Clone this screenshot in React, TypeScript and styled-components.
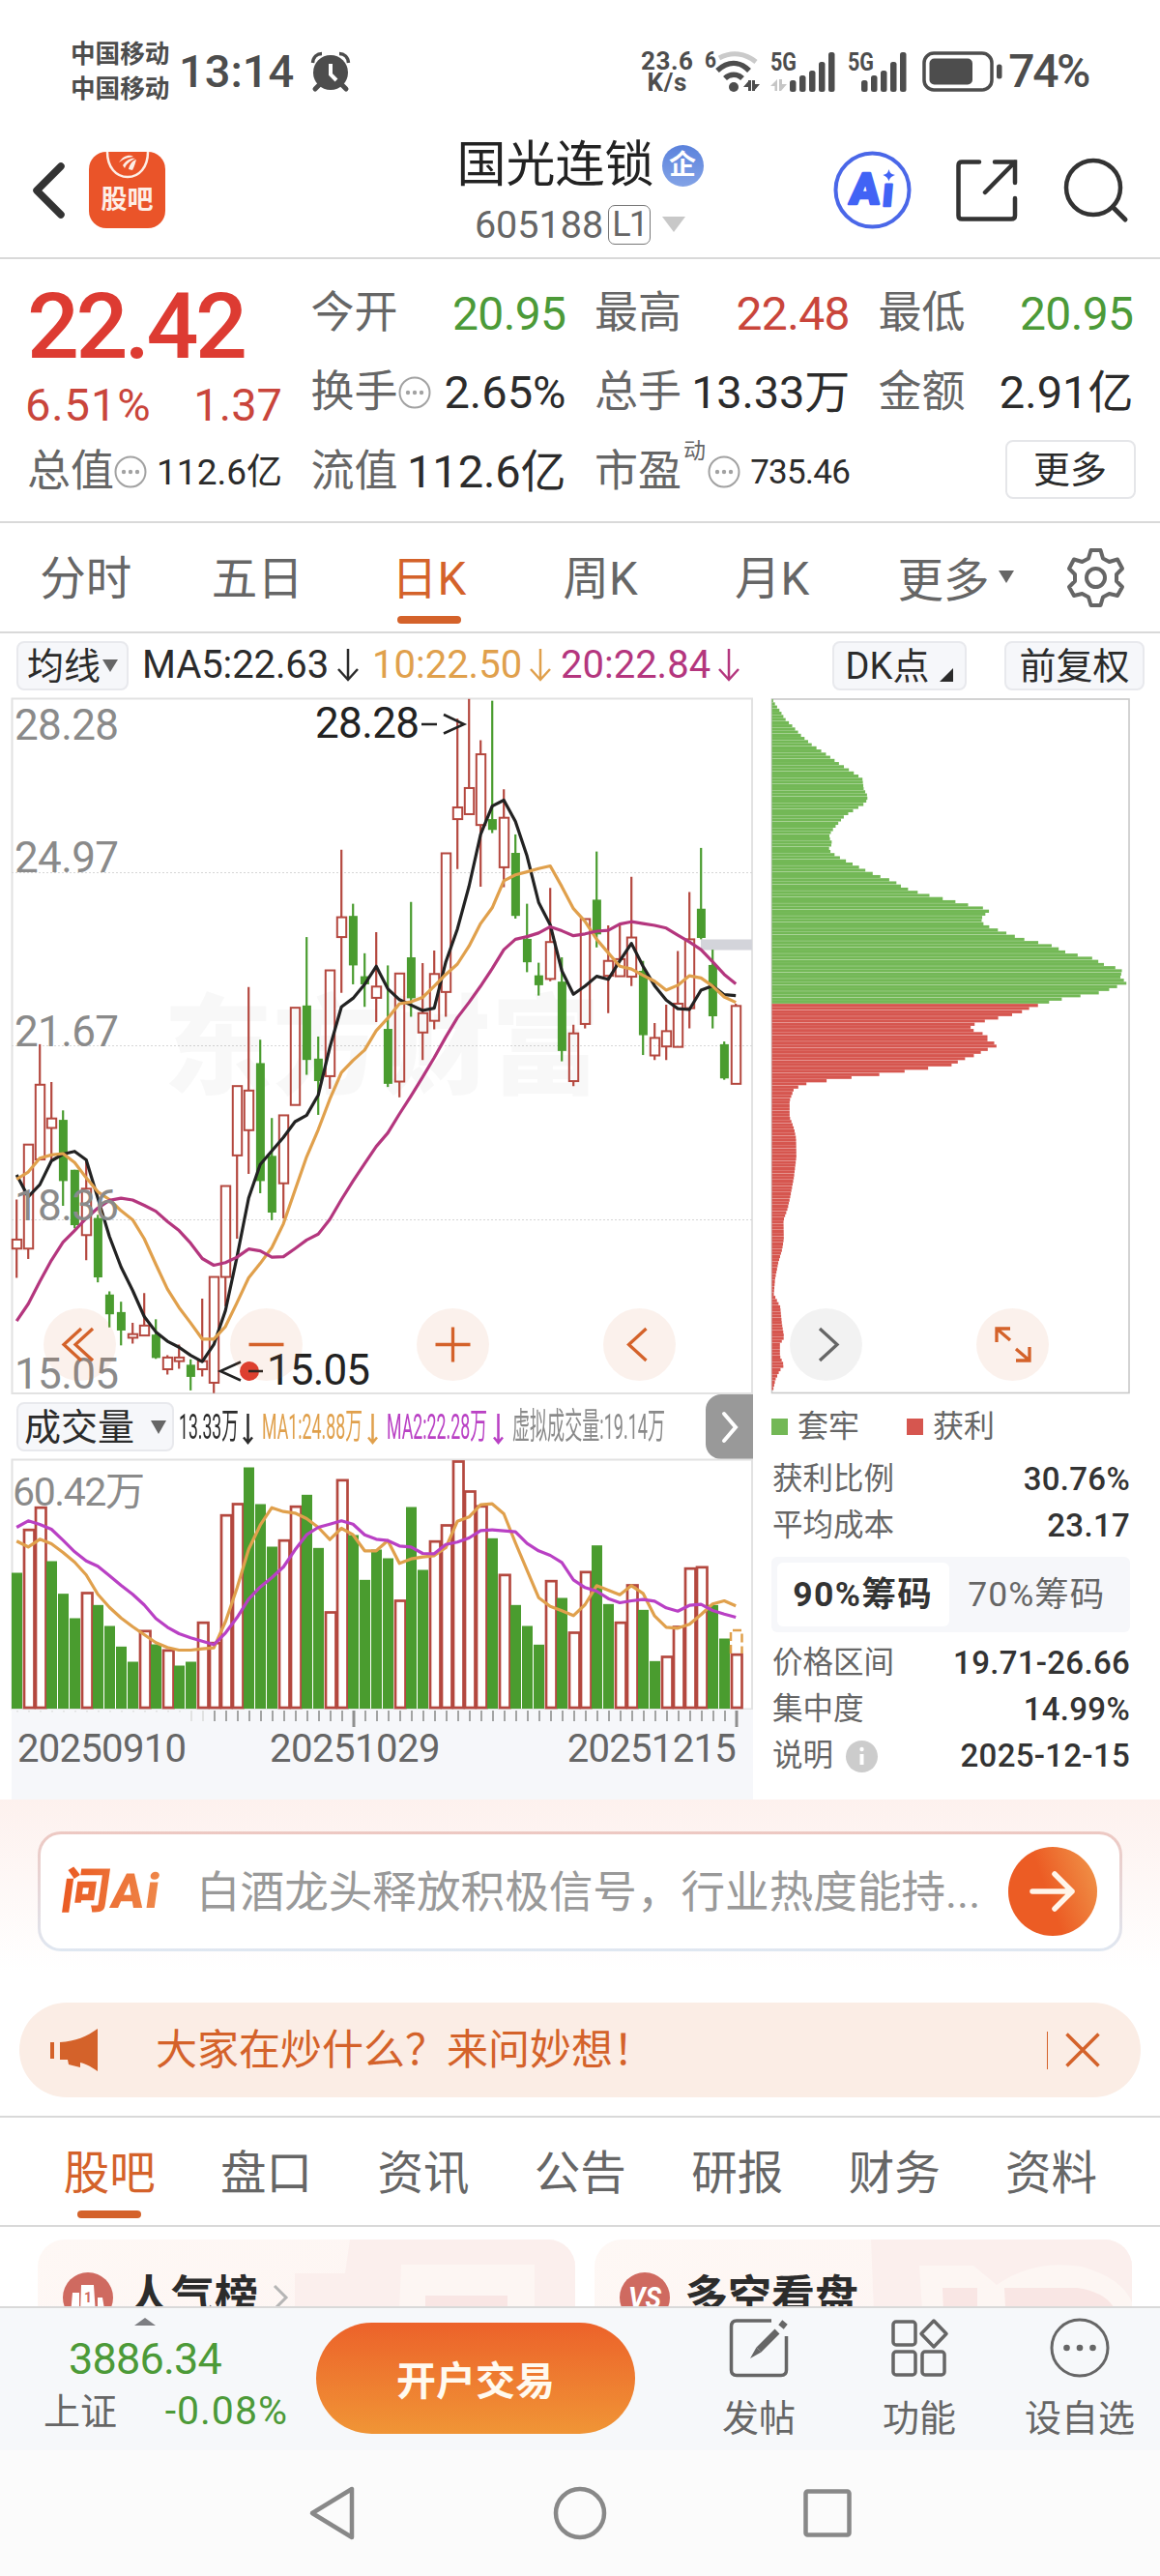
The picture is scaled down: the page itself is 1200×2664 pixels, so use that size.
import React from 'react';
import styled, { createGlobalStyle, css } from 'styled-components';

const COLORS = {
  red: '#c9453b',
  deepRed: '#dd3b32',
  green: '#4c9a38',
  orange: '#d4622a',
  ink: '#2b2b2b',
  grey: '#666',
  light: '#8a8a8a',
  line: '#d9d9d9',
  chip: '#f6f7fa',
  ma5: '#222',
  ma10: '#e0a04c',
  ma20: '#b4367e',
  vol2: '#b940c4',
};

const GlobalStyle = createGlobalStyle`
  * {
    box-sizing: border-box;
  }
  body {
    margin: 0;
    background: #fff;
    font-family: Roboto, 'Noto Sans CJK SC', sans-serif;
    color: ${COLORS.ink};
  }
  svg {
    display: block;
    flex: none;
    overflow: visible;
  }
`;

const Page = styled.div`
  width: 1200px;
  height: 2664px;
  overflow: hidden;
  display: flex;
  flex-direction: column;
`;

interface ITextProps {
  $size: number,
  $color?: string,
  $weight?: number,
  $ls?: number,
  $ml?: number,
}

const Text = styled.span<ITextProps>`
  font-size: ${p => p.$size}px;
  line-height: ${p => Math.round(p.$size * 1.1)}px;
  color: ${p => p.$color || COLORS.ink};
  font-weight: ${p => p.$weight || 400};
  letter-spacing: ${p => p.$ls || 0}px;
  margin-left: ${p => p.$ml || 0}px;
  white-space: nowrap;
`;

const Push = styled.div<{ $x: number }>`
  flex: none;
  margin-left: ${p => p.$x}px;
`;

/* ---------- status bar ---------- */

const StatusBar = styled.div`
  height: 135px;
  padding: 12px 74px 0 73px;
  display: flex;
  align-items: center;
`;

const Carriers = styled.div`
  display: flex;
  flex-direction: column;
  width: 112px;
  font-size: 25.6px;
  line-height: 36px;
  font-weight: 700;
  color: #4d4d4d;
`;

const Clock = styled.div`
  width: 137px;
  font-size: 47px;
  line-height: 50px;
  font-weight: 500;
  color: #4d4d4d;
`;

const StatusRight = styled.div`
  margin-left: auto;
  display: flex;
  align-items: center;
`;

const NetSpeed = styled.div`
  width: 66px;
  display: flex;
  flex-direction: column;
  align-items: center;
  padding-right: 10px;
  font-size: 26px;
  line-height: 22px;
  font-weight: 700;
  color: #4d4d4d;
  span {
    letter-spacing: 0.6px;
  }
`;

const AlarmIcon = () => (
  <svg width="40" height="40" viewBox="0 0 40 40">
    <path d="M1.500 11C2 5 6 1.500 11 1.500M38.500 11C38 5 34 1.500 29 1.500" stroke="#4d4d4d" strokeWidth="3.500" fill="none" />
    <path d="M9 33L4 38M31 33L36 38" stroke="#4d4d4d" strokeWidth="5" strokeLinecap="round" />
    <circle cx="20" cy="21" r="18" fill="#4d4d4d" />
    <path d="M20 12V23L26 29" stroke="#fff" strokeWidth="4" fill="none" />
  </svg>
);

const WifiIcon = () => (
  <svg width="60" height="44" viewBox="0 0 60 44">
    <text x="1" y="18" fontSize="24" fontWeight="700" fill="#4d4d4d" textLength="12" lengthAdjust="spacingAndGlyphs">6</text>
    <path d="M16 8C29 1 43 3 54 12" stroke="#cacaca" strokeWidth="5" fill="none" />
    <path d="M14 21C25 11 37 11 47 21" stroke="#4d4d4d" strokeWidth="5.500" fill="none" />
    <path d="M22 29C27 24 35 24 40 29" stroke="#4d4d4d" strokeWidth="5.500" fill="none" />
    <circle cx="31" cy="38" r="5" fill="#4d4d4d" />
    <path d="M47.500 31V42M51.500 31V42" stroke="#4d4d4d" strokeWidth="3" />
    <path d="M41 38L47 31V38ZM52 35H58L52 42Z" fill="#4d4d4d" />
  </svg>
);

const SignalIcon = ({ data }: { data?: boolean }) => {
  const start = data ? 20 : 14;
  return (
    <svg width={data ? 80 : 77} height="44" viewBox={`0 0 ${data ? 80 : 77} 44`}>
      <text x="0" y="21" fontSize="26" fontWeight="700" fill="#4d4d4d" textLength="27" lengthAdjust="spacingAndGlyphs">5G</text>
      {data && <path d="M0 37L7 30V42H4.500V37ZM9 30H12V35H17L11 42H9Z" fill="#c6c6c6" />}
      {[12, 17, 22, 31, 41].map((h, i) => (
        <rect key={h} x={start + i * 10} y={43 - h} width="6.500" height={h} rx="2.500" fill="#4d4d4d" />
      ))}
    </svg>
  );
};

const BatteryIcon = () => (
  <svg width="84" height="42" viewBox="0 0 84 42">
    <rect x="2" y="2" width="70" height="38" rx="10" stroke="#4d4d4d" strokeWidth="3.500" fill="none" />
    <rect x="7.500" y="7.500" width="44.500" height="27" rx="5" fill="#4d4d4d" />
    <rect x="77" y="13.500" width="5.500" height="15" rx="2.500" fill="#4d4d4d" />
  </svg>
);

/* ---------- header ---------- */

const Header = styled.header`
  height: 133px;
  border-bottom: 2px solid ${COLORS.line};
  padding: 0 33px 12px 33px;
  display: grid;
  grid-template-columns: 1fr auto 1fr;
  align-items: center;
`;

const HeaderSide = styled.div<{ $gap: number, $end?: boolean }>`
  display: flex;
  align-items: center;
  gap: ${p => p.$gap}px;
  justify-content: ${p => (p.$end ? 'flex-end' : 'flex-start')};
`;

const BarLogo = styled.div`
  width: 79px;
  height: 79px;
  border-radius: 18px;
  background: #ea5429;
  overflow: hidden;
  display: flex;
  flex-direction: column;
  align-items: center;
  color: #fdeee6;
  font-size: 27px;
  line-height: 40px;
  font-weight: 700;
`;

const TitleBlock = styled.div`
  display: flex;
  flex-direction: column;
  align-items: center;
  gap: 9px;
  margin-top: 10px;
`;

const TitleLine = styled.div`
  display: flex;
  align-items: center;
  height: 52px;
`;

const CorpBadge = styled.span`
  width: 43px;
  height: 43px;
  border-radius: 50%;
  margin-left: 8px;
  background: linear-gradient(#5b82dc, #83a3e6);
  color: #fff;
  font-size: 28px;
  line-height: 41px;
  font-weight: 700;
  text-align: center;
`;

const LevelBox = styled.span`
  width: 44px;
  height: 41px;
  margin-left: 5px;
  border: 1.5px solid #777;
  border-radius: 7px;
  font-size: 36px;
  line-height: 38px;
  text-align: center;
  letter-spacing: -2px;
  color: ${COLORS.grey};
`;

const Triangle = styled.i<{ $w: number, $h: number, $color: string, $up?: boolean, $ml?: number }>`
  width: 0;
  height: 0;
  margin-left: ${p => p.$ml || 0}px;
  border-left: ${p => p.$w / 2}px solid transparent;
  border-right: ${p => p.$w / 2}px solid transparent;
  ${p => (p.$up
    ? css`border-bottom: ${p.$h}px solid ${p.$color};`
    : css`border-top: ${p.$h}px solid ${p.$color};`)}
`;

/* ---------- quote ---------- */

const Quote = styled.section`
  height: 273px;
  border-bottom: 2px solid ${COLORS.line};
  padding: 15px 28px 0 28px;
  display: grid;
  grid-template-columns: repeat(4, 264px);
  grid-template-rows: repeat(3, 82px);
  column-gap: 29.5px;
`;

const PriceCell = styled.div`
  grid-row: span 2;
  display: flex;
  flex-direction: column;
  gap: 3px;
  padding-top: 2px;
`;

const Price = styled.div`
  font-size: 95px;
  line-height: 105px;
  font-weight: 500;
  letter-spacing: -3.6px;
  color: ${COLORS.deepRed};
`;

const Between = styled.div`
  display: flex;
  align-items: center;
  justify-content: space-between;
`;

const Label = styled.span`
  display: flex;
  align-items: center;
  font-size: 45px;
  line-height: 50px;
  color: ${COLORS.grey};
  white-space: nowrap;
  sup {
    font-size: 23px;
    line-height: 23px;
    margin: -44px 2px 0 2px;
  }
`;

const MoreButton = styled.button`
  width: 135px;
  height: 61px;
  margin: 8px -2px 0 auto;
  padding: 0;
  border: 2px solid #e5e6e9;
  border-radius: 8px;
  background: #fff;
  font-family: inherit;
  font-size: 38px;
  line-height: 50px;
  color: ${COLORS.ink};
`;

const DotsIcon = () => (
  <svg width="34" height="34" viewBox="0 0 34 34">
    <circle cx="17" cy="17" r="15.500" stroke="#a2a2a2" strokeWidth="2" fill="none" />
    <g fill="#a2a2a2">
      <circle cx="10" cy="17" r="2.200" />
      <circle cx="17" cy="17" r="2.200" />
      <circle cx="24" cy="17" r="2.200" />
    </g>
  </svg>
);

/* ---------- tabs ---------- */

const PeriodTabs = styled.nav`
  height: 114px;
  border-bottom: 2px solid ${COLORS.line};
  display: flex;
  align-items: stretch;
`;

const SectionTabs = styled.nav`
  height: 115px;
  border-top: 2px solid ${COLORS.line};
  border-bottom: 2px solid ${COLORS.line};
  padding-left: 32px;
  display: flex;
`;

const Tab = styled.div<{ $w: number, $active?: boolean }>`
  width: ${p => p.$w}px;
  display: flex;
  flex-direction: column;
  align-items: center;
  padding-top: 28px;
  font-size: 47.5px;
  line-height: 60px;
  color: ${p => (p.$active ? COLORS.orange : COLORS.grey)};
  &::after {
    content: '';
    width: 66px;
    height: 8px;
    margin-top: 8px;
    border-radius: 4px;
    background: ${p => (p.$active ? COLORS.orange : 'transparent')};
  }
`;

const MoreTab = styled.div`
  display: flex;
  align-items: center;
  width: 175px;
  padding-bottom: 2px;
  margin-left: 41px;
  font-size: 47.5px;
  color: ${COLORS.grey};
`;

/* ---------- chart toolbars ---------- */

const Toolbar = styled.div`
  height: 67px;
  padding: 8px 16px 0 17px;
  display: flex;
  align-items: flex-start;
`;

const Chip = styled.div<{ $w: number }>`
  width: ${p => p.$w}px;
  height: 51px;
  display: flex;
  align-items: center;
  justify-content: center;
  border: 2px solid #e8e9ed;
  border-radius: 8px;
  background: ${COLORS.chip};
  font-size: 38px;
  line-height: 46px;
  color: ${COLORS.ink};
  white-space: nowrap;
`;

const Corner = styled.i`
  align-self: flex-end;
  margin: 0 0 7px 11px;
  border-left: 14px solid transparent;
  border-bottom: 14px solid ${COLORS.ink};
`;

const Averages = styled.div`
  display: flex;
  align-items: center;
  height: 50px;
  margin-left: 14px;
`;

const Average = styled.div<{ $w: number }>`
  width: ${p => p.$w}px;
  display: flex;
  align-items: center;
`;

const DownArrow = ({ color, h = 34, w = 22 }: { color: string, h?: number, w?: number }) => (
  <svg width={w} height={h} viewBox={`0 0 ${w} ${h}`}>
    <path d={`M${w / 2} 0V${h - 2}M1 ${h - w / 2 - 2}L${w / 2} ${h - 2}L${w - 1} ${h - w / 2 - 2}`} stroke={color} strokeWidth="2.500" fill="none" />
  </svg>
);

const ChartArea = styled.div`
  position: relative;
  height: 1139px;
  padding-left: 12px;
  display: flex;
`;

const ChartColumn = styled.div`
  width: 786px;
  display: flex;
  flex-direction: column;
`;

const ChipColumn = styled.div`
  width: 371px;
  display: flex;
  flex-direction: column;
`;

const ChartControls = styled.div`
  position: absolute;
  left: 45px;
  top: 631px;
  display: flex;
  gap: 118px;
`;

const RoundControl = styled.div<{ $muted?: boolean }>`
  width: 75px;
  height: 75px;
  border-radius: 50%;
  background: ${p => (p.$muted ? 'rgba(0, 0, 0, 0.05)' : 'rgba(215, 105, 40, 0.09)')};
`;

const controls = [
  'M39 21L21 37.500L39 54M51 21L33 37.500L51 54',
  'M19.500 37.500H55.500',
  'M19.500 37.500H55.500M37.500 19.500V55.500',
  'M44.500 21L26.500 37.500L44.500 54',
  'M31 21L49 37.500L31 54',
  'M35 33L21 21M21 35V21H35M41 42L55 54M55 40V54H41',
];

const VolumeBar = styled.div`
  height: 67px;
  width: 767px;
  padding-left: 5px;
  display: flex;
  align-items: center;
`;

const VolumeFigures = styled.div`
  display: flex;
  align-items: center;
  margin-left: 5px;
`;

const Condensed = styled.div<{ $w: number, $scale: number, $color: string }>`
  width: ${p => p.$w}px;
  flex: none;
  font-size: 37px;
  line-height: 44px;
  color: ${p => p.$color};
  white-space: nowrap;
  span {
    display: inline-block;
    transform: scaleX(${p => p.$scale});
    transform-origin: left center;
  }
`;

const CondensedArrow = styled.div`
  width: 20px;
  margin-top: 4px;
`;

const NextTab = styled.div`
  width: 49px;
  height: 67px;
  margin-left: auto;
  border-radius: 16px 0 0 16px;
  background: #999;
  display: flex;
  align-items: center;
  justify-content: center;
`;

const AxisStrip = styled.div`
  width: 767px;
  height: 94px;
  background: ${COLORS.chip};
`;

const Dates = styled.div`
  display: flex;
  justify-content: space-between;
  padding: 0 18px 0 6px;
`;

/* candle rows: up/down, high, body top, body bottom, low, counted down from the frame top */
const UNIT = 0.46556;
const candles: [string, number, number, number, number][] = [
  ['u', 1118, 1207, 1227, 1292], ['u', 996, 996, 1227, 1250], ['u', 773, 863, 1029, 1029], ['u', 857, 938, 959, 1030],
  ['d', 920, 941, 1077, 1132], ['d', 1052, 1052, 1175, 1182], ['u', 1032, 1094, 1197, 1253], ['d', 1152, 1159, 1291, 1302],
  ['d', 1322, 1329, 1373, 1402], ['d', 1345, 1368, 1409, 1442], ['u', 1392, 1417, 1425, 1438], ['u', 1326, 1398, 1420, 1422],
  ['d', 1384, 1418, 1470, 1472], ['u', 1464, 1469, 1495, 1507], ['u', 1440, 1469, 1477, 1494], ['d', 1473, 1485, 1512, 1542],
  ['u', 1338, 1477, 1495, 1511], ['u', 1290, 1290, 1525, 1548], ['u', 1088, 1088, 1290, 1355], ['u', 866, 866, 1020, 1205],
  ['u', 646, 876, 964, 1061], ['d', 763, 815, 1077, 1104], ['d', 937, 1021, 1147, 1164], ['u', 931, 931, 1082, 1160],
  ['u', 692, 692, 908, 908], ['d', 535, 687, 808, 841], ['d', 756, 805, 855, 930], ['u', 609, 609, 844, 872],
  ['u', 341, 491, 535, 659], ['d', 461, 488, 598, 640], ['d', 571, 622, 640, 690], ['u', 524, 645, 670, 724],
  ['d', 598, 739, 861, 868], ['u', 616, 616, 856, 891], ['d', 457, 580, 671, 712], ['u', 593, 704, 747, 808],
  ['u', 565, 617, 721, 740], ['u', 349, 349, 657, 712], ['u', 50, 247, 273, 384], ['u', 6, 204, 262, 262],
  ['u', 98, 129, 286, 423], ['d', 10, 273, 297, 304], ['u', 207, 270, 380, 424], ['d', 307, 348, 488, 494],
  ['d', 461, 539, 591, 613], ['d', 592, 620, 642, 665], ['u', 426, 546, 628, 633], ['d', 580, 634, 788, 811],
  ['u', 730, 749, 855, 866], ['u', 495, 495, 728, 738], ['d', 345, 452, 529, 558], ['u', 509, 588, 621, 704],
  ['u', 505, 584, 622, 622], ['u', 401, 536, 623, 644], ['d', 588, 610, 753, 797], ['u', 726, 759, 798, 808],
  ['u', 685, 744, 778, 808], ['u', 566, 683, 779, 779], ['u', 435, 540, 693, 738], ['d', 337, 472, 537, 540],
  ['d', 563, 597, 711, 738], ['d', 767, 773, 849, 852], ['u', 683, 688, 861, 861],
];

const ma5 = [1063, 1112, 1085, 1032, 1017, 1011, 1030, 1115, 1200, 1268, 1320, 1378, 1412, 1433, 1446, 1464, 1478, 1440, 1365, 1245, 1115, 1040, 1010, 980, 945, 931, 886, 780, 690, 671, 640, 600, 650, 674, 686, 698, 693, 590, 517, 422, 307, 244, 231, 278, 355, 458, 508, 610, 662, 644, 622, 629, 588, 549, 600, 643, 675, 694, 696, 653, 643, 663, 665];
const ma10 = [1073, 1057, 1026, 1019, 1016, 1036, 1070, 1101, 1118, 1143, 1163, 1205, 1262, 1317, 1358, 1392, 1428, 1428, 1400, 1347, 1292, 1260, 1225, 1172, 1097, 1023, 963, 895, 836, 809, 786, 743, 715, 683, 679, 669, 644, 618, 595, 555, 505, 470, 410, 397, 390, 383, 377, 423, 472, 500, 540, 570, 600, 606, 620, 633, 653, 642, 621, 626, 644, 668, 680];
const ma20 = [1388, 1350, 1300, 1253, 1213, 1187, 1160, 1137, 1120, 1115, 1119, 1131, 1144, 1167, 1187, 1215, 1249, 1264, 1258, 1246, 1228, 1232, 1246, 1245, 1227, 1208, 1195, 1162, 1118, 1077, 1038, 1000, 970, 928, 888, 846, 803, 757, 714, 680, 644, 605, 563, 540, 534, 526, 512, 521, 532, 528, 522, 520, 506, 501, 505, 509, 515, 531, 546, 563, 590, 618, 639];

const volumes = [588, 452, 383, 552, 653, 729, 648, 688, 753, 817, 864, 766, 810, 826, 876, 864, 740, 803, 407, 372, 261, 375, 507, 485, 380, 346, 511, 708, 298, 471, 610, 516, 543, 672, 384, 579, 488, 438, 240, 333, 379, 481, 592, 688, 753, 811, 611, 666, 771, 583, 503, 685, 740, 624, 703, 862, 846, 753, 572, 568, 688, 792, 839];
const volumeUp = [1, 2, 6, 11, 13, 16, 17, 18, 19, 23, 24, 27, 28, 33, 36, 37, 38, 39, 40, 42, 46, 48, 49, 52, 53, 56, 57, 58, 59, 62];
const volMa1 = [490, 508, 484, 498, 525, 555, 595, 655, 695, 728, 755, 780, 805, 820, 828, 828, 824, 821, 740, 635, 515, 440, 386, 398, 403, 420, 447, 485, 450, 470, 520, 520, 488, 559, 545, 539, 535, 510, 428, 415, 377, 374, 405, 495, 580, 665, 692, 706, 721, 687, 628, 642, 656, 628, 652, 722, 757, 760, 748, 718, 685, 675, 691];
const volMa2 = [447, 427, 438, 453, 487, 523, 551, 568, 597, 627, 655, 688, 730, 757, 777, 790, 800, 811, 775, 727, 670, 632, 603, 570, 517, 470, 447, 437, 427, 437, 470, 484, 488, 505, 508, 528, 529, 500, 493, 480, 457, 455, 458, 461, 497, 520, 534, 556, 610, 634, 645, 668, 681, 675, 671, 676, 697, 707, 689, 686, 705, 716, 726];

const candleX = (i: number) => 5.2 + i * 12;
const priceY = (v: number) => v * UNIT - 2;
const volumeY = (v: number) => v / 3 - 78.5;

const line = (data: number[], y: (v: number) => number) => data.map((v, i) => `${candleX(i)},${y(v).toFixed(1)}`).join(' ');

const CandleChart = () => (
  <svg width="767" height="720" viewBox="0 0 767 720">
    <rect x="0.500" y="0.500" width="765.500" height="718.500" stroke="#e2e2e2" strokeWidth="2" fill="none" />
    {[180.5, 359.5, 539.5].map(y => <path key={y} d={`M0 ${y}H766`} stroke="#d6d6d6" strokeDasharray="2 2" />)}
    <text x="157" y="401" fontSize="112" fontWeight="900" fill="#000" fillOpacity="0.028" textLength="452" lengthAdjust="spacingAndGlyphs">东方财富</text>
    <rect x="713" y="249.500" width="53" height="11" fill="#d3d4da" />
    {candles.map(([dir, high, top, bottom, low], i) => {
      const x = candleX(i);
      if (dir === 'd') {
        return (
          <g key={i} fill="#4a9c2f">
            <rect x={x - 1.1} y={priceY(high)} width="2.200" height={priceY(low) - priceY(high)} />
            <rect x={x - 4.3} y={priceY(top)} width="9" height={priceY(bottom) - priceY(top)} />
          </g>
        );
      }
      return (
        <g key={i} stroke="#b4483f" strokeWidth="2.200" fill="none">
          <path d={`M${x} ${priceY(high)}V${priceY(top)}M${x} ${priceY(bottom)}V${priceY(low)}`} />
          <rect x={x - 4.4} y={priceY(top)} width="9.400" height={priceY(bottom) - priceY(top)} strokeWidth="2" />
        </g>
      );
    })}
    <g fill="none" strokeWidth="3.200" strokeLinejoin="round">
      <polyline points={line(ma5, priceY)} stroke={COLORS.ma5} />
      <polyline points={line(ma10, priceY)} stroke={COLORS.ma10} />
      <polyline points={line(ma20, priceY)} stroke={COLORS.ma20} />
    </g>
    <g fontSize="44" fill={COLORS.light}>
      <text x="3" y="43" textLength="108">28.28</text>
      <text x="3" y="180" textLength="108">24.97</text>
      <text x="3" y="360" textLength="108">21.67</text>
      <text x="3" y="540" textLength="108">18.36</text>
      <text x="3" y="714" textLength="108">15.05</text>
    </g>
    <g fontSize="44" fill="#222">
      <text x="314" y="41" textLength="108">28.28</text>
      <path d="M424 27H440M447 17L468 27L447 36.500" stroke="#222" strokeWidth="2.600" fill="none" />
      <circle cx="246" cy="696" r="10" fill="#de3d30" />
      <path d="M237 686.500L216 696L237 705.500M245 696H260" stroke="#222" strokeWidth="2.600" fill="none" />
      <text x="264" y="710" textLength="107">15.05</text>
    </g>
  </svg>
);

const VolumeChart = () => (
  <svg width="767" height="259" viewBox="0 0 767 259">
    <rect x="0.500" y="0.500" width="765.500" height="258" stroke="#e2e2e2" strokeWidth="2" fill="none" />
    {volumes.map((v, i) => {
      const y = volumeY(v);
      return volumeUp.includes(i)
        ? <rect key={i} x={candleX(i) - 4.2} y={y + 1} width="10.500" height={257 - y - 1} fill="#fff" stroke="#b4483f" strokeWidth="2.700" />
        : <rect key={i} x={candleX(i) - 5.2} y={y} width="11" height={258 - y} fill="#4a9c2f" />;
    })}
    <path d="M744 201V177H755.500V201" stroke={COLORS.ma10} strokeWidth="2.500" strokeDasharray="9 4" fill="none" />
    <g fill="none" strokeWidth="3.200" strokeLinejoin="round">
      <polyline points={line(volMa1, volumeY)} stroke={COLORS.ma10} />
      <polyline points={line(volMa2, volumeY)} stroke={COLORS.vol2} />
    </g>
    <text x="1" y="47.500" fontSize="41" fill={COLORS.light} textLength="137">60.42万</text>
  </svg>
);

const AxisTicks = () => (
  <svg width="767" height="19" viewBox="0 0 767 19">
    {volumes.map((_, i) => {
      const major = i === 29 || i === 62;
      return (
        <path
          key={i}
          d={`M${candleX(i) + 0.8} 1V${major ? 18 : (i < 15 ? 2.5 : 12)}`}
          stroke={i < 17 ? '#dcdcdc' : '#8f8f8f'}
          strokeWidth={major ? 3 : 1.6}
        />
      );
    })}
  </svg>
);

/* outline of the chip distribution: [y, width] */
const outline: [number, number][] = [
  [50, 58], [60, 66], [75, 82], [90, 95], [105, 118], [125, 145], [145, 178], [165, 222], [185, 262], [205, 308], [218, 336], [240, 340], [256, 353], [268, 347], [275, 335], [282, 316], [290, 298], [298, 280], [312, 262], [330, 240], [342, 232], [356, 243], [369, 230], [378, 245], [390, 275], [403, 315], [415, 350], [429, 400], [437, 435], [450, 462], [463, 520], [476, 600], [483, 640], [490, 682], [497, 735], [504, 722], [517, 703], [530, 714], [537, 742], [544, 770], [551, 797], [558, 825], [564, 855], [571, 910], [578, 940], [584, 951], [591, 980], [597, 1025], [604, 1068], [611, 1068], [618, 1105], [625, 1142], [638, 1138], [645, 1135], [652, 1166], [658, 1140], [665, 1110], [672, 1090], [679, 1035], [686, 967], [692, 930], [699, 892],
  [705, 864], [712, 840], [719, 818], [725, 776], [732, 735], [739, 689], [751, 667], [758, 692], [765, 724], [779, 724], [785, 769], [792, 735], [799, 713], [806, 690], [813, 668], [820, 627], [826, 642], [833, 566], [840, 490], [847, 413], [853, 331], [860, 250], [867, 170], [874, 141], [881, 123], [905, 110], [940, 110], [950, 116], [965, 124], [985, 130], [1025, 131], [1070, 123], [1110, 112], [1135, 104], [1160, 91], [1200, 92], [1222, 87], [1250, 75], [1285, 65], [1318, 61], [1345, 81], [1380, 86], [1410, 93], [1425, 80], [1450, 80], [1470, 93], [1480, 80], [1500, 66], [1525, 58],
];

const widthAt = (y: number) => {
  const next = outline.findIndex(p => p[0] >= y);
  if (next <= 0) return outline[next === 0 ? 0 : outline.length - 1][1];
  const [y0, w0] = outline[next - 1];
  const [y1, w1] = outline[next];
  return w0 + ((w1 - w0) * (y - y0)) / (y1 - y0);
};

const chipRows = Array.from({ length: 220 }, (_, i) => 51.5 + i * 6.7);

const ChipChart = () => (
  <svg width="371" height="720" viewBox="0 0 371 720">
    <rect x="0.500" y="1" width="369.500" height="717.500" stroke="#c9c9c9" strokeWidth="1.600" fill="none" />
    {chipRows.map((y, i) => (
      <rect
        key={i}
        x="0.500"
        y={(y - 48) * 0.4847 - 0.6}
        width={(widthAt(y) - 55) / 3}
        height={i % 2 ? 3.3 : 3}
        fill={y < 701 ? '#73b856' : '#d6564f'}
      />
    ))}
  </svg>
);

/* ---------- chip stats ---------- */

const Legend = styled.div`
  height: 64px;
  padding-top: 2px;
  display: flex;
  align-items: center;
  font-size: 32px;
  line-height: 40px;
  color: ${COLORS.grey};
`;

const Swatch = styled.i<{ $color: string, $ml?: number }>`
  width: 17px;
  height: 17px;
  margin: 0 10px 0 ${p => p.$ml || 0}px;
  background: ${p => p.$color};
`;

const StatRow = styled.div`
  height: 48px;
  padding-left: 1px;
  display: flex;
  align-items: center;
  justify-content: space-between;
  font-size: 31.5px;
  line-height: 40px;
  color: ${COLORS.grey};
  b {
    font-size: 33px;
    font-weight: 500;
    letter-spacing: 0.3px;
    color: #333;
  }
  span {
    display: flex;
    align-items: center;
    gap: 13px;
  }
`;

const Toggle = styled.div`
  height: 78px;
  margin: 8px 0;
  padding: 6px;
  display: flex;
  border-radius: 6px;
  background: ${COLORS.chip};
`;

const ToggleItem = styled.div<{ $on?: boolean }>`
  width: ${p => (p.$on ? 179 : 183)}px;
  border-radius: 6px;
  background: ${p => (p.$on ? '#fff' : 'transparent')};
  font-size: 35.5px;
  line-height: 66px;
  text-align: center;
  letter-spacing: ${p => (p.$on ? 1.4 : 1)}px;
  font-weight: ${p => (p.$on ? 700 : 400)};
  color: ${p => (p.$on ? '#333' : COLORS.grey)};
`;

/* ---------- ask ai ---------- */

const AskSection = styled.section`
  height: 210px;
  padding: 33px 39px 0 39px;
  background: linear-gradient(#fdf1ee, #fff 85%);
`;

const AskBox = styled.div`
  height: 124px;
  border: 3px solid transparent;
  border-radius: 24px;
  background: linear-gradient(#fff, #fff) padding-box, linear-gradient(#edc8c2, #dfe7f1) border-box;
  display: flex;
  align-items: center;
  padding: 0 23px 0 22px;
`;

const AskLogo = styled.div`
  width: 139px;
  font-size: 50px;
  line-height: 58px;
  font-weight: 900;
  letter-spacing: 1.5px;
  white-space: nowrap;
  span {
    display: inline-block;
    padding-right: 6px;
    transform: skewX(-8deg);
    background: linear-gradient(90deg, #ea5a22, #ef8a4c);
    background-clip: text;
    color: transparent;
  }
`;

const AskText = styled.div`
  padding-top: 4px;
  font-size: 45.6px;
  line-height: 54px;
  color: #999;
  white-space: nowrap;
`;

const AskGo = styled.div`
  width: 92px;
  height: 92px;
  margin-left: auto;
  border-radius: 50%;
  background: linear-gradient(70deg, #ec5c24 45%, #f0984c);
  display: flex;
  align-items: center;
  justify-content: center;
`;

const Notice = styled.div`
  height: 98px;
  margin: 0 20px 19px;
  padding: 0 42px 0 32px;
  border-radius: 49px;
  background: #fbede5;
  display: flex;
  align-items: center;
`;

const NoticeRule = styled.i`
  width: 1px;
  height: 39px;
  margin: 0 18px 0 auto;
  background: ${COLORS.orange};
`;

/* ---------- cards ---------- */

const Cards = styled.div`
  height: 82px;
  padding: 13px 29px 0 39px;
  display: flex;
  gap: 20px;
  overflow: hidden;
`;

const Card = styled.div`
  position: relative;
  width: 556px;
  height: 150px;
  border-radius: 28px;
  overflow: hidden;
  background: linear-gradient(160deg, #fef8f5, #fdf4f2);
  padding: 33px 0 0 25px;
  display: flex;
  align-items: flex-start;
`;

const CardArt = styled.svg`
  position: absolute;
  right: 0;
  top: 0;
`;

const CardTitle = styled.div`
  position: relative;
  margin-left: 14px;
  font-size: 45px;
  line-height: 54px;
  font-weight: 700;
  color: #2c2c2c;
`;

/* ---------- bottom ---------- */

const BottomBar = styled.footer`
  height: 149px;
  border-top: 2px solid ${COLORS.line};
  background: #f6f8fa;
  padding-left: 45px;
  display: flex;
`;

const IndexBox = styled.div`
  width: 253px;
  padding: 10px 0 0;
  display: flex;
  flex-direction: column;
`;

const IndexTop = styled.div`
  width: 210px;
  display: flex;
  flex-direction: column;
  align-items: center;
`;

const IndexValue = styled.div`
  padding-top: 4px;
  font-size: 45px;
  line-height: 62px;
  letter-spacing: -0.8px;
  color: ${COLORS.green};
`;

const OpenButton = styled.button`
  width: 330px;
  height: 115px;
  margin: 15px 0 0 29px;
  border: 0;
  padding: 0 0 2px;
  border-radius: 58px;
  background: linear-gradient(#ec622a, #f09536);
  font-family: inherit;
  font-size: 41px;
  font-weight: 700;
  color: #fffaf0;
`;

const Actions = styled.div`
  display: flex;
  margin-left: 45px;
`;

const Action = styled.div`
  width: 166px;
  padding-top: 10px;
  display: flex;
  flex-direction: column;
  align-items: center;
  gap: 17px;
  font-size: 38px;
  line-height: 50px;
  color: ${COLORS.grey};
`;

const SystemNav = styled.div`
  flex: 1;
  background: #fbfbfb;
  display: flex;
  justify-content: center;
  align-items: center;
  gap: 203px;
`;

const periods = ['分时', '五日', '日K', '周K', '月K'];
const sections = ['股吧', '盘口', '资讯', '公告', '研报', '财务', '资料'];

const App: React.FC = () => (
  <Page>
    <GlobalStyle />

    <StatusBar>
      <Carriers>
        <span>中国移动</span>
        <span>中国移动</span>
      </Carriers>
      <Clock>13:14</Clock>
      <AlarmIcon />
      <StatusRight>
        <NetSpeed>
          <span>23.6</span>
          <span>K/s</span>
        </NetSpeed>
        <WifiIcon />
        <Push $x={9}><SignalIcon data /></Push>
        <SignalIcon />
        <BatteryIcon />
        <Text $size={48} $weight={500} $color="#4d4d4d" $ml={5} $ls={-2.4}>74%</Text>
      </StatusRight>
    </StatusBar>

    <Header>
      <HeaderSide $gap={25}>
        <svg width="34" height="60" viewBox="0 0 34 60">
          <path d="M30 5L5 30L30 55" stroke="#333" strokeWidth="7.500" strokeLinecap="round" strokeLinejoin="round" fill="none" />
        </svg>
        <BarLogo>
          <svg width="50" height="30" viewBox="0 0 50 30">
            <path d="M4 0C4 16 13 26 25 26S46 16 46 0" stroke="#fdeee6" strokeWidth="2.500" fill="none" />
            <path d="M16 11C20 4 27 2 31 5C24 6 20 8 16 11ZM20 14C24 8 29 6 33 7C28 9 24 12 22 17ZM26 18C27 13 30 9 34 8C33 12 32 15 30 19Z" fill="#fdeee6" />
          </svg>
          股吧
        </BarLogo>
      </HeaderSide>
      <TitleBlock>
        <TitleLine>
          <Text $size={51} $color="#222">国光连锁</Text>
          <CorpBadge>企</CorpBadge>
        </TitleLine>
        <TitleLine>
          <Text $size={39.5} $color={COLORS.grey}>605188</Text>
          <LevelBox>L1</LevelBox>
          <Triangle $w={25} $h={16} $color="#c8c8c8" $ml={12} />
        </TitleLine>
      </TitleBlock>
      <HeaderSide $gap={46} $end>
        <svg width="81" height="81" viewBox="0 0 81 81">
          <circle cx="40.500" cy="40.500" r="38" stroke="#4a67e8" strokeWidth="4" fill="none" />
          <g fill="#4163f5" stroke="#4163f5" strokeWidth="2.500" strokeLinejoin="round" fontWeight="900">
            <text transform="translate(16 55) skewX(-5)" fontSize="45" textLength="31" lengthAdjust="spacingAndGlyphs">A</text>
            <text transform="translate(50 57) skewX(-5)" fontSize="42" textLength="11" lengthAdjust="spacingAndGlyphs">ı</text>
          </g>
          <path d="M57.500 19C58.500 23 60 24 64 25C60 26.500 58.500 28 57.500 31.500C56.500 28 55 26.500 51.500 25C55 24 56.500 23 57.500 19Z" fill="#4163f5" />
        </svg>
        <svg width="64" height="64" viewBox="0 0 64 64">
          <path d="M24 2.500H6Q2.500 2.500 2.500 6V58Q2.500 61.500 6 61.500H57Q61 61.500 61 58V40" stroke="#333" strokeWidth="4.500" strokeLinecap="round" fill="none" />
          <path d="M40 2.500H61V24M61 2.500L30 34" stroke="#333" strokeWidth="4.500" strokeLinecap="round" fill="none" />
        </svg>
        <svg width="68" height="66" viewBox="0 0 68 66">
          <circle cx="32" cy="30" r="28" stroke="#333" strokeWidth="4.500" fill="none" />
          <path d="M52 50L65 63" stroke="#333" strokeWidth="5" strokeLinecap="round" />
        </svg>
      </HeaderSide>
    </Header>

    <Quote>
      <PriceCell>
        <Price>22.42</Price>
        <Between>
          <Text $size={47} $color={COLORS.red} $ls={0.9} $ml={-2}>6.51%</Text>
          <Text $size={47} $color={COLORS.red}>1.37</Text>
        </Between>
      </PriceCell>
      <Between><Label>今开</Label><Text $size={48} $ls={-0.6} $color={COLORS.green}>20.95</Text></Between>
      <Between><Label>最高</Label><Text $size={48} $ls={-0.6} $color={COLORS.red}>22.48</Text></Between>
      <Between><Label>最低</Label><Text $size={48} $ls={-0.6} $color={COLORS.green}>20.95</Text></Between>
      <Between><Label>换手<DotsIcon /></Label><Text $size={47}>2.65%</Text></Between>
      <Between><Label>总手</Label><Text $size={47} $ls={-0.2}>13.33万</Text></Between>
      <Between><Label>金额</Label><Text $size={47}>2.91亿</Text></Between>
      <Between><Label>总值<DotsIcon /></Label><Text $size={37}>112.6亿</Text></Between>
      <Between><Label>流值</Label><Text $size={47} $ls={-0.1}>112.6亿</Text></Between>
      <Between><Label>市盈<sup>动</sup><DotsIcon /></Label><Text $size={35} $ls={-0.8}>735.46</Text></Between>
      <MoreButton>更多</MoreButton>
    </Quote>

    <PeriodTabs>
      {periods.map(name => <Tab key={name} $w={177.5} $active={name === '日K'}>{name}</Tab>)}
      <MoreTab>更多<Triangle $w={17} $h={13} $color={COLORS.grey} $ml={9} /></MoreTab>
      <svg width="60" height="112" viewBox="0 0 60 112">
        <path d="M24.500 28H34.500L37 36.500L43.500 40L52 37.500L57 47L51 53V60L57 66L52 75L43.500 73L37 76.500L34.500 85H24.500L22 76.500L15.500 73L7 75L2 66L8 60V53L2 47L7 37.500L15.500 40L22 36.500Z" stroke={COLORS.grey} strokeWidth="4" strokeLinejoin="round" fill="none" />
        <circle cx="29.500" cy="56.500" r="9.500" stroke={COLORS.grey} strokeWidth="4" fill="none" />
      </svg>
    </PeriodTabs>

    <Toolbar>
      <Chip $w={116}>均线<Triangle $w={16} $h={13} $color={COLORS.grey} $ml={2} /></Chip>
      <Averages>
        <Average $w={238}><Text $size={40} $ls={-0.1}>MA5:22.63</Text><Push $x={9}><DownArrow color={COLORS.ink} /></Push></Average>
        <Average $w={195}><Text $size={40} $color={COLORS.ma10}>10:22.50</Text><Push $x={8}><DownArrow color={COLORS.ma10} /></Push></Average>
        <Average $w={200}><Text $size={40} $color={COLORS.ma20}>20:22.84</Text><Push $x={8}><DownArrow color={COLORS.ma20} /></Push></Average>
      </Averages>
      <Push $x={81}><Chip $w={139}>DK点<Corner /></Chip></Push>
      <Push $x={39}><Chip $w={145}>前复权</Chip></Push>
    </Toolbar>

    <ChartArea>
      <ChartColumn>
        <CandleChart />
        <VolumeBar>
          <Chip $w={163}>成交量<Triangle $w={16} $h={14} $color={COLORS.grey} $ml={17} /></Chip>
          <VolumeFigures>
            <Condensed $w={66} $scale={0.475} $color={COLORS.ink}><span>13.33万</span></Condensed>
            <CondensedArrow><DownArrow color={COLORS.ink} w={11} h={32} /></CondensedArrow>
            <Condensed $w={109} $scale={0.48} $color={COLORS.ma10}><span>MA1:24.88万</span></Condensed>
            <CondensedArrow><DownArrow color={COLORS.ma10} w={11} h={32} /></CondensedArrow>
            <Condensed $w={110} $scale={0.48} $color={COLORS.vol2}><span>MA2:22.28万</span></Condensed>
            <CondensedArrow><DownArrow color={COLORS.vol2} w={11} h={32} /></CondensedArrow>
            <Condensed $w={160} $scale={0.488} $color={COLORS.light}><span>虚拟成交量:19.14万</span></Condensed>
          </VolumeFigures>
          <NextTab>
            <svg width="18" height="32" viewBox="0 0 18 32">
              <path d="M3 2L15 16L3 30" stroke="#fff" strokeWidth="4" strokeLinecap="round" fill="none" />
            </svg>
          </NextTab>
        </VolumeBar>
        <VolumeChart />
        <AxisStrip>
          <AxisTicks />
          <Dates>
            <Text $size={40} $ls={-0.7} $color={COLORS.grey}>20250910</Text>
            <Text $size={40} $ls={-0.5} $color={COLORS.grey} $ml={8}>20251029</Text>
            <Text $size={40} $ls={-0.7} $color={COLORS.grey} $ml={53}>20251215</Text>
          </Dates>
        </AxisStrip>
      </ChartColumn>
      <ChipColumn>
        <ChipChart />
        <Legend>
          <Swatch $color="#73b856" />套牢
          <Swatch $color="#d6564f" $ml={49} />获利
        </Legend>
        <StatRow>获利比例<b>30.76%</b></StatRow>
        <StatRow>平均成本<b>23.17</b></StatRow>
        <Toggle>
          <ToggleItem $on>90%筹码</ToggleItem>
          <ToggleItem>70%筹码</ToggleItem>
        </Toggle>
        <StatRow>价格区间<b>19.71-26.66</b></StatRow>
        <StatRow>集中度<b>14.99%</b></StatRow>
        <StatRow>
          <span>
            说明
            <svg width="33" height="33" viewBox="0 0 33 33">
              <circle cx="16.500" cy="16.500" r="16.500" fill="#ccc" />
              <circle cx="16.500" cy="9" r="2.200" fill="#fff" />
              <path d="M16.500 14V25" stroke="#fff" strokeWidth="4" />
            </svg>
          </span>
          <b>2025-12-15</b>
        </StatRow>
      </ChipColumn>
      <ChartControls>
        {controls.map((d, i) => (
          <RoundControl key={d} $muted={i === 4}>
            <svg width="75" height="75" viewBox="0 0 75 75">
              <path d={d} stroke={i === 4 ? '#666' : COLORS.orange} strokeWidth="3.300" fill="none" />
            </svg>
          </RoundControl>
        ))}
      </ChartControls>
    </ChartArea>

    <AskSection>
      <AskBox>
        <AskLogo><span>问Ai</span></AskLogo>
        <AskText>白酒龙头释放积极信号，行业热度能持...</AskText>
        <AskGo>
          <svg width="48" height="42" viewBox="0 0 48 42">
            <path d="M3 21H44M26 3L44 21L26 39" stroke="#fff5ea" strokeWidth="5.500" strokeLinecap="round" strokeLinejoin="round" fill="none" />
          </svg>
        </AskGo>
      </AskBox>
    </AskSection>

    <Notice>
      <svg width="52" height="44" viewBox="0 0 52 44">
        <path d="M2 14V31" stroke={COLORS.orange} strokeWidth="4" />
        <path d="M10 14C26 13 38 8 49 0V44C43 40 39 37 31 35V40L19 37L18 32H10Z" fill={COLORS.orange} />
      </svg>
      <Text $size={43} $color={COLORS.orange} $ml={57}>大家在炒什么？来问妙想！</Text>
      <NoticeRule />
      <svg width="36" height="36" viewBox="0 0 36 36">
        <path d="M1.500 1.500L34.500 34.500M34.500 1.500L1.500 34.500" stroke={COLORS.orange} strokeWidth="3.500" />
      </svg>
    </Notice>

    <SectionTabs>
      {sections.map((name, i) => <Tab key={name} $w={162.4} $active={i === 0}>{name}</Tab>)}
    </SectionTabs>

    <Cards>
      <Card>
        <CardArt width="290" height="150" viewBox="0 0 290 150">
          <path d="M57 0H290V150H0V35H52Z" fill="#fbefed" />
          <path d="M110 26H248V150H105Z" fill="#fdf6f3" />
          <path d="M135 58H220V150H135Z" fill="#f9e6e4" />
        </CardArt>
        <svg width="54" height="54" viewBox="0 0 54 54">
          <circle cx="27" cy="27" r="26" fill="#cf6a60" />
          <path d="M11 22H18V45H9ZM20 14H33L35 45H19ZM37 27H42L45 45H37Z" fill="#fff" />
          <text x="23" y="32" fontSize="14" fontWeight="700" fill="#cf6a60">1</text>
        </svg>
        <CardTitle>人气榜</CardTitle>
        <svg width="32" height="54" viewBox="0 0 32 54">
          <path d="M17 15L29 27L17 39" stroke="#b5b5b5" strokeWidth="3" fill="none" />
        </svg>
      </Card>
      <Card>
        <CardArt width="272" height="150" viewBox="0 0 272 150">
          <path d="M2 0H272V150H8Z" fill="#fbefed" />
          <path d="M52 27H108L132 47Q170 20 220 28Q262 40 272 65V150H60Z" fill="#fdf6f3" />
          <path d="M76 50H112V150H80ZM140 50H215Q252 55 258 82L240 150H145Z" fill="#f9e6e4" />
        </CardArt>
        <svg width="54" height="54" viewBox="0 0 54 54">
          <circle cx="27" cy="27" r="26" fill="#cf6a60" />
          <text x="10" y="38" fontSize="31" fontWeight="700" fontStyle="italic" fill="#fff" textLength="34" lengthAdjust="spacingAndGlyphs">VS</text>
        </svg>
        <CardTitle>多空看盘</CardTitle>
      </Card>
    </Cards>

    <BottomBar>
      <IndexBox>
        <IndexTop>
          <Triangle $up $w={23} $h={8} $color="#7d7e82" />
          <IndexValue>3886.34</IndexValue>
        </IndexTop>
        <Between>
          <Text $size={38} $color={COLORS.grey}>上证</Text>
          <Text $size={41} $ls={1} $color={COLORS.green}>-0.08%</Text>
        </Between>
      </IndexBox>
      <OpenButton>开户交易</OpenButton>
      <Actions>
        <Action>
          <svg width="62" height="62" viewBox="0 0 62 62">
            <path d="M44 3H8Q2.500 3 2.500 9V54Q2.500 59.500 8 59.500H54Q59.500 59.500 59.500 54V19" stroke={COLORS.grey} strokeWidth="3.500" fill="none" />
            <path d="M54 9.500L58 4.500M50 14L31 33" stroke={COLORS.grey} strokeWidth="7" />
            <path d="M33.500 35.500L22 42L28.500 30.500Z" fill={COLORS.grey} />
          </svg>
          发帖
        </Action>
        <Action>
          <svg width="60" height="62" viewBox="0 0 60 62">
            <g stroke={COLORS.grey} strokeWidth="3.500" fill="none" strokeLinejoin="round">
              <rect x="3" y="4" width="23" height="24" rx="3" />
              <rect x="3" y="35" width="23" height="24" rx="3" />
              <rect x="33" y="35" width="23" height="24" rx="3" />
              <path d="M45 3L58 16.500L45 30L32 16.500Z" />
            </g>
          </svg>
          功能
        </Action>
        <Action>
          <svg width="62" height="62" viewBox="0 0 62 62">
            <circle cx="31" cy="31" r="29" stroke={COLORS.grey} strokeWidth="3" fill="none" />
            <g fill={COLORS.grey}>
              <circle cx="17.500" cy="31" r="3.300" />
              <circle cx="31" cy="31" r="3.300" />
              <circle cx="44.500" cy="31" r="3.300" />
            </g>
          </svg>
          设自选
        </Action>
      </Actions>
    </BottomBar>

    <SystemNav>
      <svg width="50" height="58" viewBox="0 0 50 58">
        <path d="M45 4V54L4 29Z" stroke="#888" strokeWidth="4.500" strokeLinejoin="round" fill="none" />
      </svg>
      <svg width="56" height="56" viewBox="0 0 56 56">
        <circle cx="28" cy="28" r="25" stroke="#888" strokeWidth="4.500" fill="none" />
      </svg>
      <svg width="50" height="50" viewBox="0 0 50 50">
        <rect x="2.500" y="2.500" width="45" height="45" rx="2" stroke="#888" strokeWidth="4.500" fill="none" />
      </svg>
    </SystemNav>
  </Page>
);

export default App;
